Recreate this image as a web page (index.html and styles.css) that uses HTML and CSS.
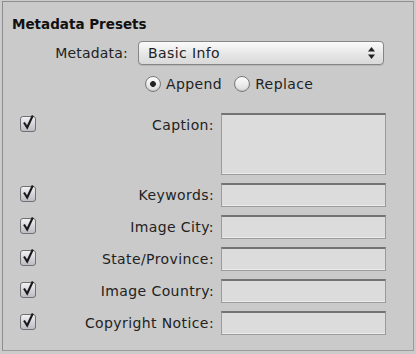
FILE: index.html
```html
<!DOCTYPE html>
<html lang="en">
<head>
    <meta charset="UTF-8">
    <title>Metadata Presets</title>
    <link rel="stylesheet" href="styles.css">
</head>
<body>

    <div class="panel">
        <h1 class="title">Metadata Presets</h1>

        <!-- Preset popup -->
        <div class="preset-row">
            <span class="preset-label">Metadata:</span>
            <div class="popup">
                <span>Basic Info</span>
                <svg class="popup-arrows" width="9" height="14" viewBox="0 0 9 14">
                    <path d="M4.5 1 L8 5.5 L1 5.5 Z" fill="#222"/>
                    <path d="M4.5 13 L8 8.5 L1 8.5 Z" fill="#222"/>
                </svg>
            </div>
        </div>

        <!-- Append / Replace -->
        <div class="mode-row">
            <label class="radio-item"><span class="radio on"></span>Append</label>
            <label class="radio-item"><span class="radio"></span>Replace</label>
        </div>

        <!-- Fields -->
        <div class="fields">
            <span class="check"><svg width="16" height="18" viewBox="0 0 16 18"><path d="M4 9.5 L7.2 14.5 L12.8 2.5" fill="none" stroke="#1a1a1a" stroke-width="2.1"/></svg></span>
            <span class="field-label">Caption:</span>
            <span class="text-field tall"></span>

            <span class="check"><svg width="16" height="18" viewBox="0 0 16 18"><path d="M4 9.5 L7.2 14.5 L12.8 2.5" fill="none" stroke="#1a1a1a" stroke-width="2.1"/></svg></span>
            <span class="field-label">Keywords:</span>
            <span class="text-field"></span>

            <span class="check"><svg width="16" height="18" viewBox="0 0 16 18"><path d="M4 9.5 L7.2 14.5 L12.8 2.5" fill="none" stroke="#1a1a1a" stroke-width="2.1"/></svg></span>
            <span class="field-label">Image City:</span>
            <span class="text-field"></span>

            <span class="check"><svg width="16" height="18" viewBox="0 0 16 18"><path d="M4 9.5 L7.2 14.5 L12.8 2.5" fill="none" stroke="#1a1a1a" stroke-width="2.1"/></svg></span>
            <span class="field-label">State/Province:</span>
            <span class="text-field"></span>

            <span class="check"><svg width="16" height="18" viewBox="0 0 16 18"><path d="M4 9.5 L7.2 14.5 L12.8 2.5" fill="none" stroke="#1a1a1a" stroke-width="2.1"/></svg></span>
            <span class="field-label">Image Country:</span>
            <span class="text-field"></span>

            <span class="check"><svg width="16" height="18" viewBox="0 0 16 18"><path d="M4 9.5 L7.2 14.5 L12.8 2.5" fill="none" stroke="#1a1a1a" stroke-width="2.1"/></svg></span>
            <span class="field-label">Copyright Notice:</span>
            <span class="text-field"></span>
        </div>
    </div>

</body>
</html>
```

FILE: styles.css
```css
body {
    margin: 0;
    background-color: #cbcbcb;
    font-family: "DejaVu Sans", sans-serif;
    font-size: 14px;
    color: #222;
}

.panel {
    margin: 1px 0 0 2px;
    width: 410px;
    height: 348px;
    border: 1px solid #8e8e8e;
    border-right-color: #9a9a9a;
    border-bottom-color: #9a9a9a;
    background-color: #cacaca;
}

.title {
    margin: 0;
    padding: 14px 0 0 9px;
    font-size: 13.5px;
    line-height: 16px;
    font-weight: bold;
    color: #111;
}

/* Preset popup row */
.preset-row {
    display: flex;
    align-items: center;
    margin-top: 9px;
    height: 24px;
}

.preset-label {
    width: 125px;
    text-align: right;
    letter-spacing: 0.2px;
}

.popup {
    display: flex;
    align-items: center;
    justify-content: space-between;
    box-sizing: border-box;
    margin-left: 10px;
    width: 246px;
    height: 24px;
    padding: 0 7px 0 9px;
    border: 1px solid #858585;
    border-radius: 4px;
    background: linear-gradient(#fbfbfb, #e6e6e6 55%, #d9d9d9);
    box-shadow: 0 1px 0 #b5b5b5;
    letter-spacing: 0.4px;
}

.popup-arrows {
    display: block;
}

/* Append / Replace */
.mode-row {
    display: flex;
    align-items: center;
    gap: 12px;
    margin: 7px 0 0 142px;
    height: 24px;
}

.radio-item {
    display: flex;
    align-items: center;
    letter-spacing: 0.4px;
}

.radio {
    box-sizing: border-box;
    width: 16px;
    height: 16px;
    margin-right: 5px;
    border: 1px solid #7a7a7a;
    border-radius: 50%;
    background: linear-gradient(#fdfdfd, #dcdcdc);
    box-shadow: inset 0 -1px 1px #c4c4c4;
}

.radio.on {
    background: radial-gradient(circle, #1e1e1e 0, #2a2a2a 2.6px, transparent 3.2px), linear-gradient(#fdfdfd, #dcdcdc);
}

/* Checkbox rows */
.fields {
    display: grid;
    grid-template-columns: 16px 171px 165px;
    column-gap: 7px;
    row-gap: 8px;
    margin: 17px 0 0 17px;
}

.check {
    position: relative;
    box-sizing: border-box;
    width: 16px;
    height: 16px;
    margin-top: 3px;
    border: 1px solid #6f6f75;
    border-radius: 3px;
    background: linear-gradient(#f2f2f5, #d2d2d8 55%, #bdbdc4);
}

.check svg {
    position: absolute;
    left: -1px;
    top: -4px;
}

.field-label {
    text-align: right;
    line-height: 24px;
    letter-spacing: 0.4px;
}

.text-field {
    box-sizing: border-box;
    height: 24px;
    border: 1px solid #9b9b9b;
    border-top: 2px solid #737373;
    background-color: #dcdcdc;
    box-shadow: inset 0 -1px 0 #ececec;
}

.text-field.tall {
    height: 62px;
}
```
